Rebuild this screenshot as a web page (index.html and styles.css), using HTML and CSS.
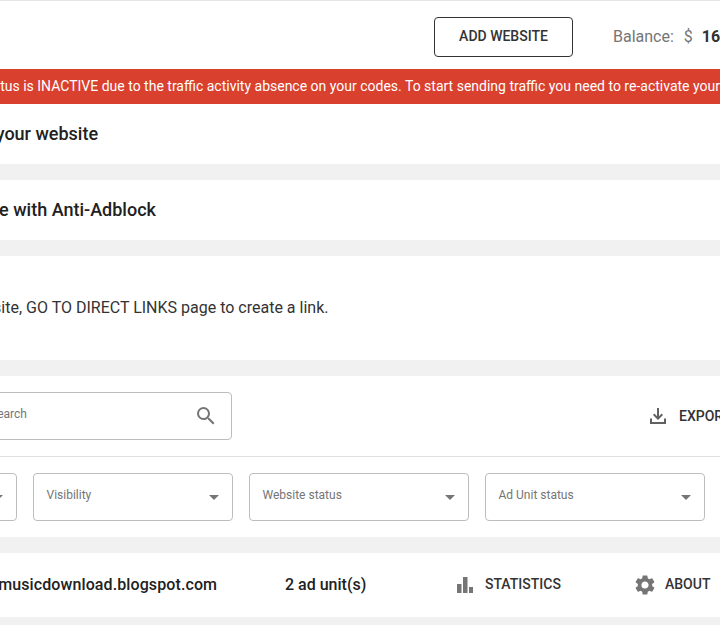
FILE: index.html
```html
<!DOCTYPE html>
<html lang="en">
<head>
<meta charset="utf-8">
<title>Websites</title>
<link rel="stylesheet" href="styles.css">
</head>
<body>
<div class="page">
  <header class="topbar">
    <button class="add-btn">ADD WEBSITE</button>
    <div class="balance"><span class="balance-label">Balance:</span><span class="balance-cur">$</span><b class="balance-val">16.42</b></div>
  </header>
  <div class="alert"><span class="alert-text">Your website status is INACTIVE due to the traffic activity absence on your codes. To start sending traffic you need to re-activate your website</span></div>
  <section class="card card-head"><h2 class="title title-a">Add your website</h2></section>
  <section class="card card-head"><h2 class="title title-b">Monetize with Anti-Adblock</h2></section>
  <section class="card card-info"><p class="info">If you don't have a website, GO TO DIRECT LINKS page to create a link.</p></section>
  <section class="card card-filters">
    <div class="toolbar">
      <div class="search">
        <span class="search-ph">Search</span>
        <svg class="search-icon" viewBox="0 0 24 24"><path d="M15.5 14h-.79l-.28-.27A6.47 6.47 0 0 0 16 9.5 6.5 6.5 0 1 0 9.5 16c1.61 0 3.09-.59 4.23-1.57l.27.28v.79l5 4.99L20.49 19l-4.99-5zm-6 0C7.01 14 5 11.99 5 9.5S7.01 5 9.5 5 14 7.01 14 9.5 11.99 14 9.5 14z"/></svg>
      </div>
      <div class="export">
        <svg class="export-icon" viewBox="0 0 16 16"><path d="M7 0h2v8.2l2.6-2.6L13 7l-5 5-5-5 1.4-1.4L7 8.200z"/><path d="M0 10.500h2V14h12v-3.500h2V16H0z"/></svg>
        <span class="export-text">EXPORT</span>
      </div>
    </div>
    <div class="selects">
      <div class="select select-first"><span class="select-label">Category</span><i class="caret"></i></div>
      <div class="select select-vis"><span class="select-label">Visibility</span><i class="caret"></i></div>
      <div class="select select-wide"><span class="select-label">Website status</span><i class="caret"></i></div>
      <div class="select select-wide"><span class="select-label">Ad Unit status</span><i class="caret"></i></div>
    </div>
  </section>
  <section class="card site-row">
    <span class="site-name">onlinemusicdownload.blogspot.com</span>
    <span class="site-units">2 ad unit(s)</span>
    <span class="site-action site-stats">
      <svg class="stats-icon" viewBox="0 0 16 16"><path d="M0 7h4.500v9H0zM6 0h4.500v16H6zM12 10h4v6h-4z"/></svg>
      STATISTICS
    </span>
    <span class="site-action site-about">
      <svg class="gear-icon" viewBox="0 0 24 24"><path d="M19.14 12.94c.04-.3.06-.61.06-.94 0-.32-.02-.64-.07-.94l2.030-1.580a.49.49 0 0 0 .12-.61l-1.920-3.320a.49.49 0 0 0-.59-.22l-2.390.96c-.5-.38-1.030-.7-1.620-.94l-.36-2.540a.48.48 0 0 0-.48-.41h-3.840a.47.47 0 0 0-.47.41l-.36 2.540c-.59.24-1.130.57-1.620.94l-2.390-.96a.49.49 0 0 0-.59.22L2.740 8.870a.48.48 0 0 0 .12.61l2.030 1.580c-.05.3-.09.63-.09.94s.02.64.07.94l-2.030 1.580a.49.49 0 0 0-.12.61l1.920 3.320c.12.22.37.29.59.22l2.390-.96c.5.38 1.030.7 1.620.94l.36 2.540c.05.24.24.41.48.41h3.840c.24 0 .44-.17.47-.41l.36-2.540c.59-.24 1.130-.56 1.620-.94l2.390.96c.22.08.47 0 .59-.22l1.920-3.320a.48.48 0 0 0-.12-.61l-2.010-1.580zM12 15.600A3.610 3.610 0 0 1 8.400 12c0-1.980 1.620-3.600 3.600-3.600s3.600 1.620 3.600 3.600-1.620 3.600-3.600 3.600z"/></svg>
      ABOUT
    </span>
  </section>
  <section class="card card-tail"></section>
</div>
</body>
</html>
```
FILE: styles.css
```css
* { box-sizing: border-box; }
html, body { margin: 0; padding: 0; height: 633px; overflow: hidden; background: #fff; }
body { font-family: Roboto, "Liberation Sans", sans-serif; color: #212121; }
.page { width: 720px; background: #f1f1f1; }

.topbar { height: 69px; background: #fff; border-top: 1px solid #e4e4e4; display: flex; align-items: center; padding: 4px 0 0 434px; white-space: nowrap; }
.add-btn { flex: none; width: 139px; height: 40px; background: #fff; border: 1px solid #333; border-radius: 4px; font: 500 14px Roboto, sans-serif; color: #333; padding: 0 0 2px; }
.balance { margin: 0 0 2px 40px; display: flex; font-size: 16px; color: #757575; flex: none; }
.balance-cur { margin-left: 10px; }
.balance-val { margin-left: 9px; font-weight: 700; color: #333; }

.alert { height: 35px; background: #da402e; color: #fff; font-size: 14px; line-height: 34px; white-space: nowrap; overflow: hidden; }
.alert-text { display: block; margin-left: -103px; }

.card { background: #fff; margin-bottom: 16px; overflow: hidden; }
.card-head { height: 60px; display: flex; align-items: center; padding-bottom: 2px; }
.title { margin: 0; font-size: 18px; font-weight: 500; white-space: nowrap; color: #212121; }
.title-a { margin-left: -41px; }
.title-b { margin-left: -66px; }
.card-info { height: 104px; display: flex; align-items: center; padding-bottom: 2px; }
.info { margin: 0 0 0 -168px; font-size: 16px; white-space: nowrap; color: #333; }

.card-filters { height: 161px; }
.toolbar { height: 81px; border-bottom: 1px solid #e0e0e0; display: flex; align-items: flex-start; white-space: nowrap; }
.search { flex: none; margin: 16px 0 0 -100px; width: 332px; height: 48px; border: 1px solid #bdbdbd; border-radius: 4px; display: flex; align-items: center; padding-left: 89px; padding-right: 13px; justify-content: space-between; }
.search-ph { font-size: 12px; color: #757575; margin-bottom: 4px; }
.search-icon { width: 24px; height: 24px; fill: #757575; }
.export { flex: none; margin: 32px 0 0 418px; display: flex; align-items: center; height: 16px; }
.export-icon { width: 16px; height: 16px; fill: #616161; }
.export-text { margin-left: 13px; font-size: 14px; font-weight: 500; color: #333; }

.selects { display: flex; gap: 16px; padding-top: 16px; margin-left: -100px; }
.select { height: 48px; border: 1px solid #bdbdbd; border-radius: 4px; position: relative; padding: 13px 0 0 12.5px; flex: none; }
.select-first { width: 117px; }
.select-vis { width: 200px; }
.select-wide { width: 220px; }
.select-label { font-size: 12px; line-height: 16px; color: #757575; display: block; }
.caret { position: absolute; right: 13px; top: 21px; width: 0; height: 0; border-left: 5px solid transparent; border-right: 5px solid transparent; border-top: 5px solid #757575; }

.site-row { height: 64px; margin-bottom: 8px; display: flex; align-items: center; white-space: nowrap; font-size: 16px; font-weight: 500; color: #212121; padding-bottom: 2px; }
.site-name { margin-left: -46px; width: 331px; flex: none; letter-spacing: .1px; }
.site-units { width: 172px; flex: none; }
.site-action { display: flex; align-items: center; font-size: 14px; color: #333; }
.site-stats { width: 179px; flex: none; }
.stats-icon { width: 16px; height: 16px; fill: #757575; margin-right: 12px; position: relative; top: 1px; }
.gear-icon { width: 24px; height: 24px; fill: #757575; margin: 0 8px 0 -3px; position: relative; top: 1px; }
.card-tail { height: 8px; margin: 0; }
```
